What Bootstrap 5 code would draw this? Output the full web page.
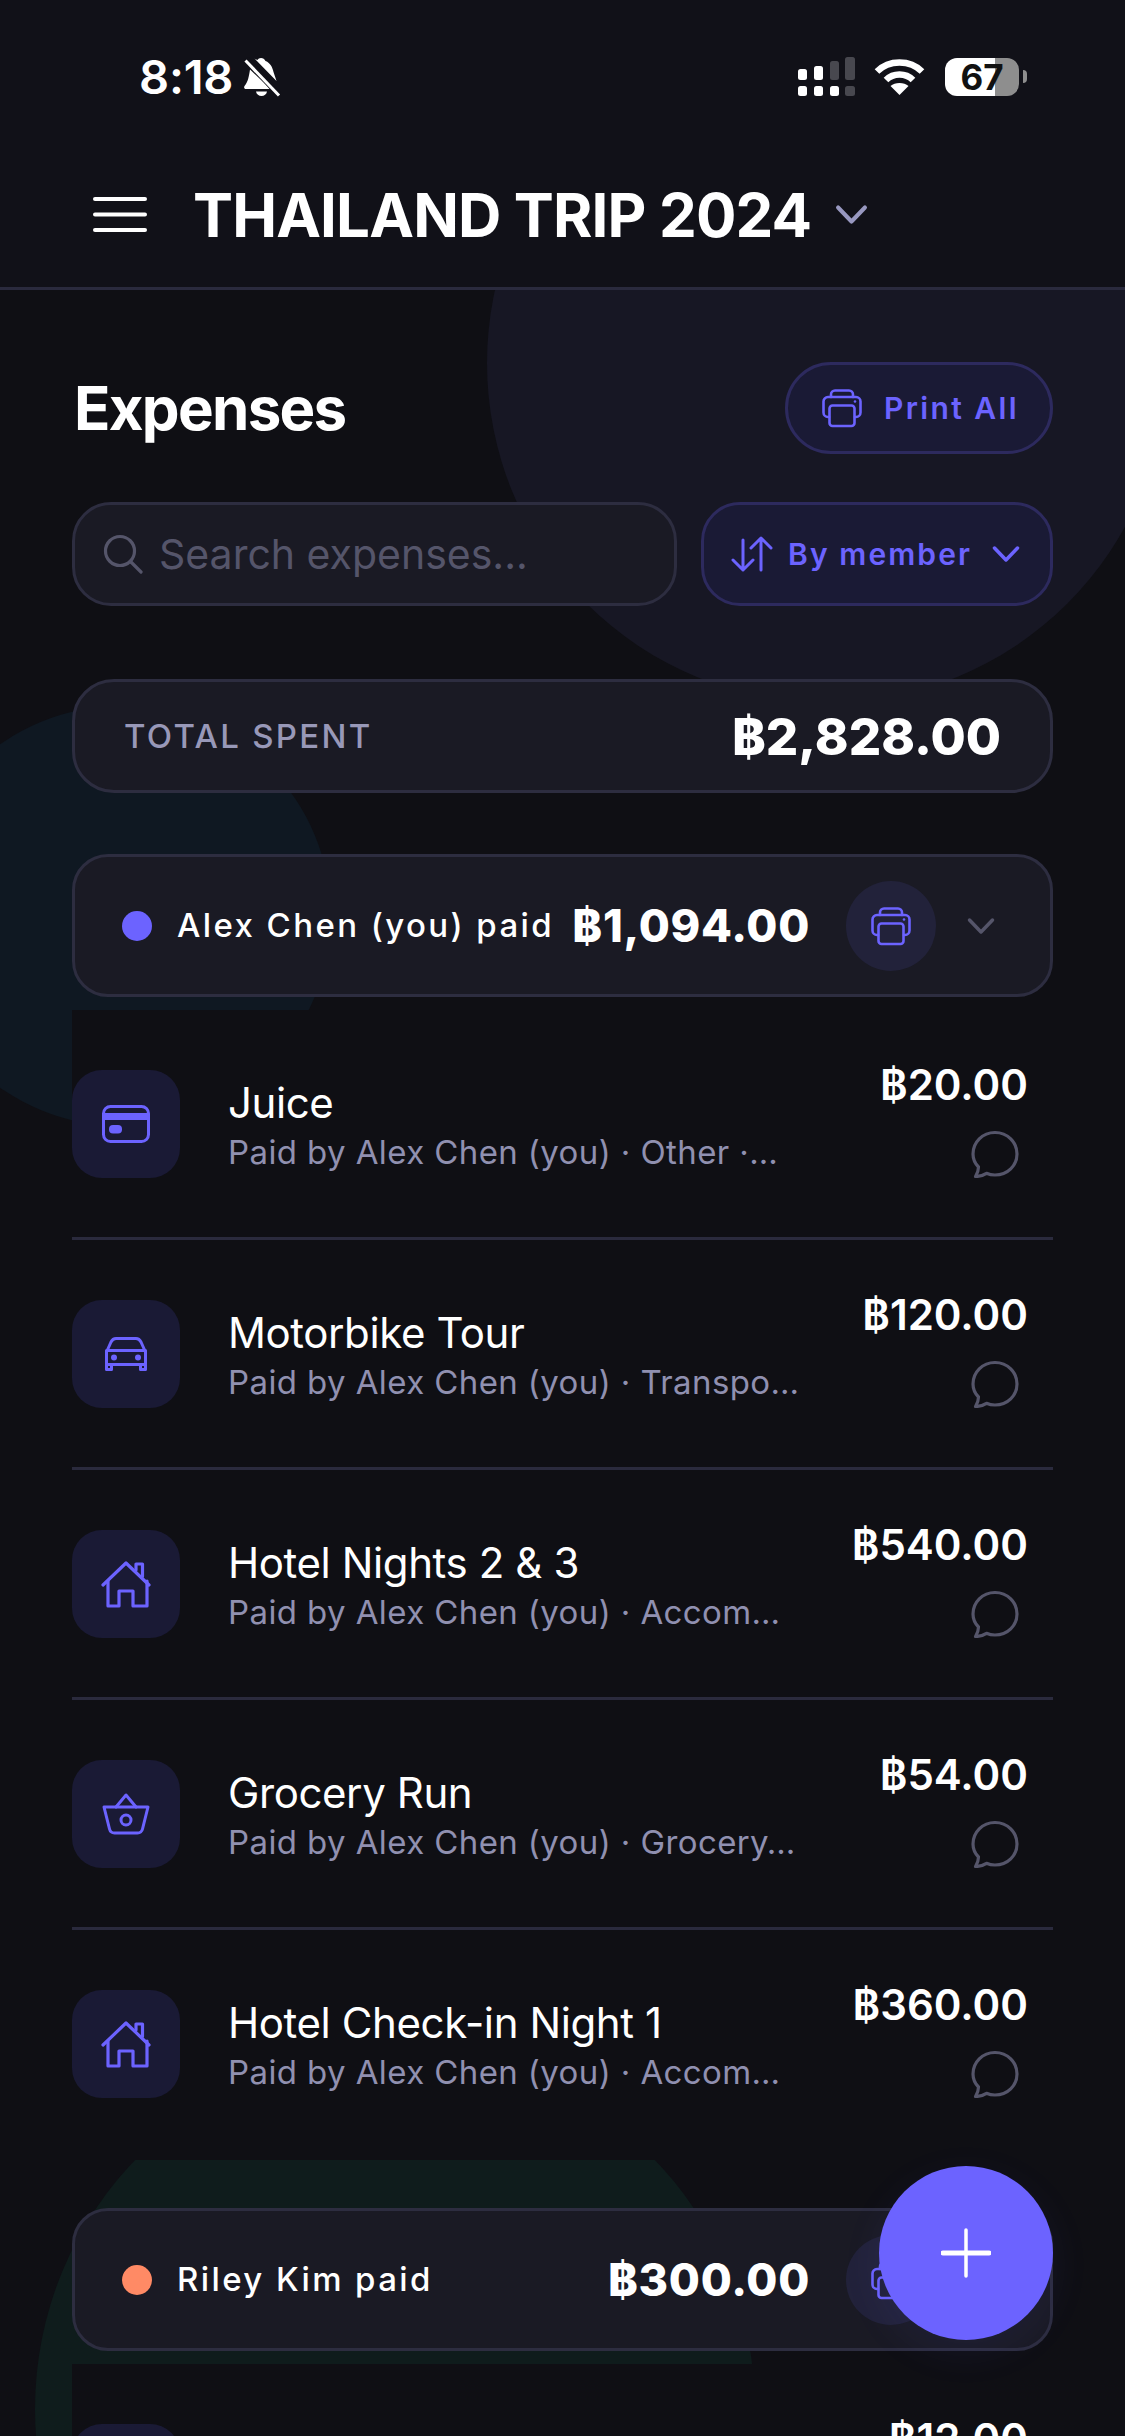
<!DOCTYPE html>
<html lang="en">
<head>
  <meta charset="UTF-8">
  <meta name="viewport" content="width=device-width, initial-scale=1.0">
  <title>Thailand Trip 2024 - Expenses</title>
  <link href="https://cdn.jsdelivr.net/npm/bootstrap@5.3.0/dist/css/bootstrap.min.css" rel="stylesheet">
  <style>
    html, body { height: 100%; overflow: hidden; }
    body { background: #0f0f14; color: #fff; font-family: Inter, "Liberation Sans", sans-serif; }
    svg { display: block; flex-shrink: 0; }
    .screen { height: 2436px; overflow: hidden; }

    /* background blobs */
    .blob { position: absolute; border-radius: 50%; }
    .blob-purple { left: 487px; top: 23px; width: 680px; height: 680px; background: #171724; }
    .blob-blue { left: -89px; top: 706px; width: 420px; height: 420px; background: #0f1822; }
    .blob-green { left: 35px; top: 2049px; width: 720px; height: 720px; background: #0f1c1c; }

    /* status bar + header */
    .top-wrap { position: relative; z-index: 2; background: #111118; height: 290px; border-bottom: 3px solid #2a2a3d; }
    .status-row { height: 150px; padding: 57px 98px 0 139px; }
    .clock { font-size: 47px; font-weight: 600; line-height: 40px; width: 96px; letter-spacing: -.2px; }
    .wifi-ico { margin-left: 19px; }
    .batt { width: 74px; height: 38px; border-radius: 12px; margin-left: 20px; background: linear-gradient(90deg, #fff 0 50px, #8e8e8e 50px); color: #111; font-size: 35px; font-weight: 700; line-height: 38px; text-align: center; }
    .batt-nub { width: 4px; height: 13px; background: #8e8e8e; border-radius: 0 4px 4px 0; margin-left: 4px; }
    .trip-row { padding-left: 93px; height: 137px; padding-bottom: 8px; }
    .trip-name { font-size: 60px; font-weight: 700; margin: 0 0 0 46px; letter-spacing: -.85px; line-height: 72px; }
    .trip-chev { color: #9898c0; }

    /* page section */
    .page-main { position: relative; z-index: 1; padding: 72px 72px 0; }
    .page-title { font-size: 60px; font-weight: 700; letter-spacing: -1.7px; margin: 0 0 0 2px; line-height: 72px; }
    .accent-btn { background: #1a1a35; border: 3px solid #2d2a5e; color: #6c63ff; font-weight: 600; font-size: 30px; display: flex; align-items: center; padding: 0; }
    .accent-btn:hover, .accent-btn:focus { background: #1a1a35; color: #6c63ff; border-color: #2d2a5e; }
    .print-all { width: 268px; height: 92px; border-radius: 46px; padding-left: 34px; gap: 22px; letter-spacing: 2.4px; }
    .sort-btn { width: 352px; height: 104px; border-radius: 39px; padding-left: 27px; letter-spacing: 2.1px; }
    .sort-label { margin-left: 15px; margin-right: 20px; }
    .search-box { width: 605px; height: 104px; background: #1a1a24; border: 3px solid #2d2d40; border-radius: 39px; padding-left: 28px; gap: 16px; }
    .search-input { background: transparent; border: 0; padding: 2px 0 0; font-size: 41px; color: #fff; box-shadow: none; }
    .search-input:focus { background: transparent; box-shadow: none; }
    .search-input::placeholder { color: #55556a; opacity: 1; }
    .filter-row { margin-top: 48px; gap: 24px; }

    .total-box { margin-top: 73px; height: 114px; background: #1a1a24; border: 3px solid #2d2d40; border-radius: 42px; padding: 2px 49px 0; }
    .total-label { font-size: 33px; font-weight: 500; letter-spacing: 2.3px; color: #9898b8; }
    .total-value { font-size: 51px; font-weight: 800; }

    .group-box { height: 143px; background: #1a1a24; border: 3px solid #2d2d40; border-radius: 36px; padding: 0 55px 0 47px; }
    .group-dot { width: 30px; height: 30px; border-radius: 50%; flex-shrink: 0; margin-right: 25px; }
    .group-name { font-size: 33px; font-weight: 500; letter-spacing: 2.4px; white-space: nowrap; }
    .group-amount { font-size: 45px; font-weight: 800; letter-spacing: .7px; white-space: nowrap; }
    .print-round { width: 90px; height: 90px; border-radius: 50%; background: #22223a; margin: 0 31px 0 36px; flex-shrink: 0; color: #6c63ff; }
    .group-chev { color: #55556a; }

    .expense-list { margin: 13px 0 0; background: #0f0f14; }
    .expense-list > .expense-item { background: #0f0f14; border-width: 0 0 3px; border-style: solid; border-color: #2a2a3d; border-radius: 0; padding: 60px 25px 59px 0; height: 230px; color: #fff; }
    .expense-ico { width: 108px; height: 108px; border-radius: 30px; background: #1a1a35; margin-right: 48px; flex-shrink: 0; }
    .expense-title { font-size: 42px; line-height: 50px; margin-top: 8px; letter-spacing: -.4px; }
    .expense-sub { font-size: 33px; line-height: 40px; letter-spacing: .4px; color: #9090b0; white-space: nowrap; margin-top: 4px; }
    .expense-amt { font-size: 42px; font-weight: 600; line-height: 40px; margin-top: -5px; }
    .expense-side { height: 108px; }
    .comment-ico { color: #55556a; margin-right: 9px; }
    .second-group { margin-top: 48px; }

    .fab-add { position: absolute; z-index: 5; left: 879px; top: 2166px; width: 174px; height: 174px; border-radius: 50%; background: #6c63ff; border: 0; padding: 0; box-shadow: 0 12px 40px rgba(108, 99, 255, .08); }
  </style>
</head>
<body>
  <svg width="0" height="0" class="position-absolute">
    <defs>
      <symbol id="ico-print" viewBox="0 0 40 40" fill="none" stroke="currentColor" stroke-width="2.6" stroke-linecap="round" stroke-linejoin="round">
        <path d="M9 9V6.500a4 4 0 0 1 4-4h14a4 4 0 0 1 4 4V9"/>
        <path d="M7 29H6a4.500 4.500 0 0 1-4.500-4.500V13.500A4.500 4.500 0 0 1 6 9h28a4.500 4.500 0 0 1 4.500 4.500v11A4.500 4.500 0 0 1 34 29h-1"/>
        <rect x="7.500" y="17.500" width="25" height="20.500" rx="3"/>
        <circle cx="33" cy="13.500" r="1.300" fill="currentColor" stroke="none"/>
      </symbol>
      <symbol id="ico-chev" viewBox="0 0 28 18" fill="none" stroke="currentColor" stroke-width="3.500" stroke-linecap="round" stroke-linejoin="round">
        <path d="M2.500 3 14 15 25.500 3"/>
      </symbol>
      <symbol id="ico-comment" viewBox="0 0 48 48" fill="none" stroke="currentColor" stroke-width="3.200" stroke-linejoin="round">
        <path d="M7.500 37C4 33.500 2 29 2 24 2 12.400 11.400 2.500 24 2.500S46 12.400 46 24 36.600 45 24 45c-3.200 0-6-.6-8.500-1.700C12 45.600 8 46.500 4.500 46.500c1.800-2.800 3-6 3-9.500z"/>
      </symbol>
      <symbol id="ico-house" viewBox="0 0 50 47" fill="none" stroke="currentColor" stroke-width="3.200" stroke-linecap="round" stroke-linejoin="round">
        <path d="M2 24 25 2l23 22"/>
        <path d="M7 20v25h11V30h14v15h14V20"/>
        <path d="M35 9V3h6.500v12.500"/>
      </symbol>
    </defs>
  </svg>

  <div class="screen position-relative">
    <div class="blob blob-purple"></div>
    <div class="blob blob-blue"></div>
    <div class="blob blob-green"></div>

    <header class="top-wrap">
      <div class="status-row d-flex justify-content-between align-items-start">
        <div class="d-flex align-items-center">
          <span class="clock">8:18</span>
          <svg class="ms-2" width="38" height="40" viewBox="0 0 38 40" fill="#fff">
            <path d="M18 1c2 0 3.500 1 4.500 3 5 2 7 6.500 8 11l3 9-23-23.500C12.500 3 14 2.500 14.500 3 15 1.700 16.500 1 18 1z"/>
            <path d="M7 12.500 27.500 32H3c-1.800 0-2.500-2-1.300-3.300C5 25 6 19 7 12.500z"/>
            <path d="M13 34.500h11c-.5 2.800-2.800 4.500-5.500 4.500S13.500 37.300 13 34.500z"/>
            <path d="M3 1.500 36 38" stroke="#111118" stroke-width="6"/>
            <path d="M2.500 3.500 36 38.500" stroke="#fff" stroke-width="3"/>
          </svg>
        </div>
        <div class="d-flex align-items-center">
          <svg width="57" height="39" viewBox="0 0 57 39" fill="#fff">
            <rect x="0" y="12" width="9" height="11" rx="2.500"/><rect x="16" y="9" width="9" height="14" rx="2.500"/>
            <rect x="32" y="4" width="9" height="19" rx="2.500" fill="#48484f"/><rect x="47" y="0" width="10" height="23" rx="2.500" fill="#48484f"/>
            <rect x="0" y="29" width="9" height="10" rx="2.500"/><rect x="16" y="29" width="9" height="10" rx="2.500"/>
            <rect x="32" y="29" width="9" height="10" rx="2.500"/><rect x="47" y="29" width="10" height="10" rx="2.500" fill="#48484f"/>
          </svg>
          <svg class="wifi-ico" width="51" height="36" viewBox="0 0 51 36" fill="none" stroke="#fff" stroke-width="6.500">
            <path d="M3 12.500C8.500 7 16.500 3.500 25.500 3.500S42.500 7 48 12.500"/>
            <path d="M12 21c3.500-3.500 8.300-5.500 13.500-5.500S35.500 17.500 39 21"/>
            <path d="M25.500 36 16.500 27c2.300-2 5.500-3 9-3s6.700 1 9 3z" fill="#fff" stroke="none"/>
          </svg>
          <div class="batt">67</div>
          <div class="batt-nub"></div>
        </div>
      </div>
      <div class="trip-row d-flex align-items-center">
        <svg width="54" height="35" viewBox="0 0 54 35" fill="#fff">
          <rect width="54" height="4" rx="2"/><rect y="15.500" width="54" height="4" rx="2"/><rect y="31" width="54" height="4" rx="2"/>
        </svg>
        <h1 class="trip-name">THAILAND TRIP 2024</h1>
        <svg class="ms-4 trip-chev" width="33" height="21"><use href="#ico-chev"/></svg>
      </div>
    </header>

    <main class="page-main">
      <div class="d-flex justify-content-between align-items-center">
        <h2 class="page-title">Expenses</h2>
        <button type="button" class="btn accent-btn print-all">
          <svg width="40" height="40"><use href="#ico-print"/></svg>Print All
        </button>
      </div>

      <div class="filter-row d-flex">
        <div class="search-box d-flex align-items-center">
          <svg width="40" height="40" viewBox="0 0 40 40" fill="none" stroke="#55556a" stroke-width="3.200" stroke-linecap="round">
            <circle cx="17" cy="17" r="14.500"/><path d="m28 28 10 10"/>
          </svg>
          <input type="text" class="form-control search-input" placeholder="Search expenses...">
        </div>
        <button type="button" class="btn accent-btn sort-btn">
          <svg width="42" height="36" viewBox="0 0 42 36" fill="none" stroke="currentColor" stroke-width="3" stroke-linecap="round" stroke-linejoin="round">
            <path d="M12 4v30M2 24l10 10 10-10"/><path d="M30 34V2M20 12 30 2l10 10"/>
          </svg>
          <span class="sort-label">By member</span>
          <svg width="28" height="18"><use href="#ico-chev"/></svg>
        </button>
      </div>

      <div class="total-box d-flex justify-content-between align-items-center">
        <span class="total-label">TOTAL SPENT</span>
        <span class="total-value">฿2,828.00</span>
      </div>

      <section style="margin-top:61px">
        <div class="group-box d-flex align-items-center">
          <span class="group-dot" style="background:#6c63ff"></span>
          <span class="group-name flex-grow-1">Alex Chen (you) paid</span>
          <span class="group-amount">฿1,094.00</span>
          <span class="print-round d-flex align-items-center justify-content-center"><svg width="40" height="40"><use href="#ico-print"/></svg></span>
          <svg class="group-chev" width="28" height="18"><use href="#ico-chev"/></svg>
        </div>

        <div class="list-group list-group-flush expense-list">
          <div class="list-group-item expense-item d-flex">
            <div class="expense-ico d-flex align-items-center justify-content-center">
              <svg width="48" height="38" viewBox="0 0 48 38" fill="none" stroke="#6c63ff" stroke-width="3"><rect x="1.500" y="1.500" width="45" height="35" rx="7"/><path d="M1.500 11.500h45" stroke-width="7"/><rect x="7" y="20" width="13" height="8.500" rx="4" fill="#6c63ff" stroke="none"/></svg>
            </div>
            <div class="flex-grow-1">
              <div class="expense-title">Juice</div>
              <div class="expense-sub">Paid by Alex Chen (you) · Other ·…</div>
            </div>
            <div class="expense-side d-flex flex-column justify-content-between align-items-end">
              <div class="expense-amt">฿20.00</div>
              <svg class="comment-ico" width="48" height="48"><use href="#ico-comment"/></svg>
            </div>
          </div>
          <div class="list-group-item expense-item d-flex">
            <div class="expense-ico d-flex align-items-center justify-content-center">
              <svg width="42" height="34" viewBox="0 0 42 34" fill="none" stroke="#6c63ff" stroke-width="3" stroke-linejoin="round"><path d="M2 14 6 5c1-2 2.500-3.500 5-3.500h20c2.500 0 4 1.500 5 3.500l4 9"/><path d="M1.500 13.500h39v14h-39z"/><path d="M1.500 27.500v5h5v-5M35.500 27.500v5h5v-5"/><circle cx="9" cy="20.500" r="3" fill="#6c63ff" stroke="none"/><circle cx="33" cy="20.500" r="3" fill="#6c63ff" stroke="none"/></svg>
            </div>
            <div class="flex-grow-1">
              <div class="expense-title">Motorbike Tour</div>
              <div class="expense-sub">Paid by Alex Chen (you) · Transpo…</div>
            </div>
            <div class="expense-side d-flex flex-column justify-content-between align-items-end">
              <div class="expense-amt">฿120.00</div>
              <svg class="comment-ico" width="48" height="48"><use href="#ico-comment"/></svg>
            </div>
          </div>
          <div class="list-group-item expense-item d-flex">
            <div class="expense-ico d-flex align-items-center justify-content-center">
              <svg width="50" height="47" style="color:#6c63ff"><use href="#ico-house"/></svg>
            </div>
            <div class="flex-grow-1">
              <div class="expense-title">Hotel Nights 2 &amp; 3</div>
              <div class="expense-sub">Paid by Alex Chen (you) · Accom…</div>
            </div>
            <div class="expense-side d-flex flex-column justify-content-between align-items-end">
              <div class="expense-amt">฿540.00</div>
              <svg class="comment-ico" width="48" height="48"><use href="#ico-comment"/></svg>
            </div>
          </div>
          <div class="list-group-item expense-item d-flex">
            <div class="expense-ico d-flex align-items-center justify-content-center">
              <svg width="48" height="42" viewBox="0 0 48 42" fill="none" stroke="#6c63ff" stroke-width="3" stroke-linejoin="round" stroke-linecap="round"><path d="M14 14 24 2l10 12"/><path d="M2 14h44l-5.500 22c-.6 2.500-2.500 4-5 4h-23c-2.500 0-4.400-1.500-5-4z"/><circle cx="24" cy="27" r="5"/></svg>
            </div>
            <div class="flex-grow-1">
              <div class="expense-title">Grocery Run</div>
              <div class="expense-sub">Paid by Alex Chen (you) · Grocery…</div>
            </div>
            <div class="expense-side d-flex flex-column justify-content-between align-items-end">
              <div class="expense-amt">฿54.00</div>
              <svg class="comment-ico" width="48" height="48"><use href="#ico-comment"/></svg>
            </div>
          </div>
          <div class="list-group-item expense-item d-flex">
            <div class="expense-ico d-flex align-items-center justify-content-center">
              <svg width="50" height="47" style="color:#6c63ff"><use href="#ico-house"/></svg>
            </div>
            <div class="flex-grow-1">
              <div class="expense-title">Hotel Check-in Night 1</div>
              <div class="expense-sub">Paid by Alex Chen (you) · Accom…</div>
            </div>
            <div class="expense-side d-flex flex-column justify-content-between align-items-end">
              <div class="expense-amt">฿360.00</div>
              <svg class="comment-ico" width="48" height="48"><use href="#ico-comment"/></svg>
            </div>
          </div>
        </div>
      </section>

      <section class="second-group">
        <div class="group-box d-flex align-items-center">
          <span class="group-dot" style="background:#ff8a65"></span>
          <span class="group-name flex-grow-1">Riley Kim paid</span>
          <span class="group-amount">฿300.00</span>
          <span class="print-round d-flex align-items-center justify-content-center"><svg width="40" height="40"><use href="#ico-print"/></svg></span>
          <svg class="group-chev" width="28" height="18"><use href="#ico-chev"/></svg>
        </div>
        <div class="list-group list-group-flush expense-list">
          <div class="list-group-item expense-item d-flex">
            <div class="expense-ico"></div>
            <div class="flex-grow-1"></div>
            <div class="expense-side d-flex flex-column align-items-end">
              <div class="expense-amt">฿12.00</div>
            </div>
          </div>
        </div>
      </section>
    </main>

    <button type="button" class="btn fab-add d-flex align-items-center justify-content-center" aria-label="Add expense">
      <svg width="50" height="50" viewBox="0 0 50 50" stroke="#fff" stroke-linecap="round"><path d="M25 2v46" stroke-width="3.500"/><path d="M2 25h46" stroke-width="5"/></svg>
    </button>
  </div>

  <script src="https://cdn.jsdelivr.net/npm/bootstrap@5.3.0/dist/js/bootstrap.bundle.min.js"></script>
</body>
</html>
